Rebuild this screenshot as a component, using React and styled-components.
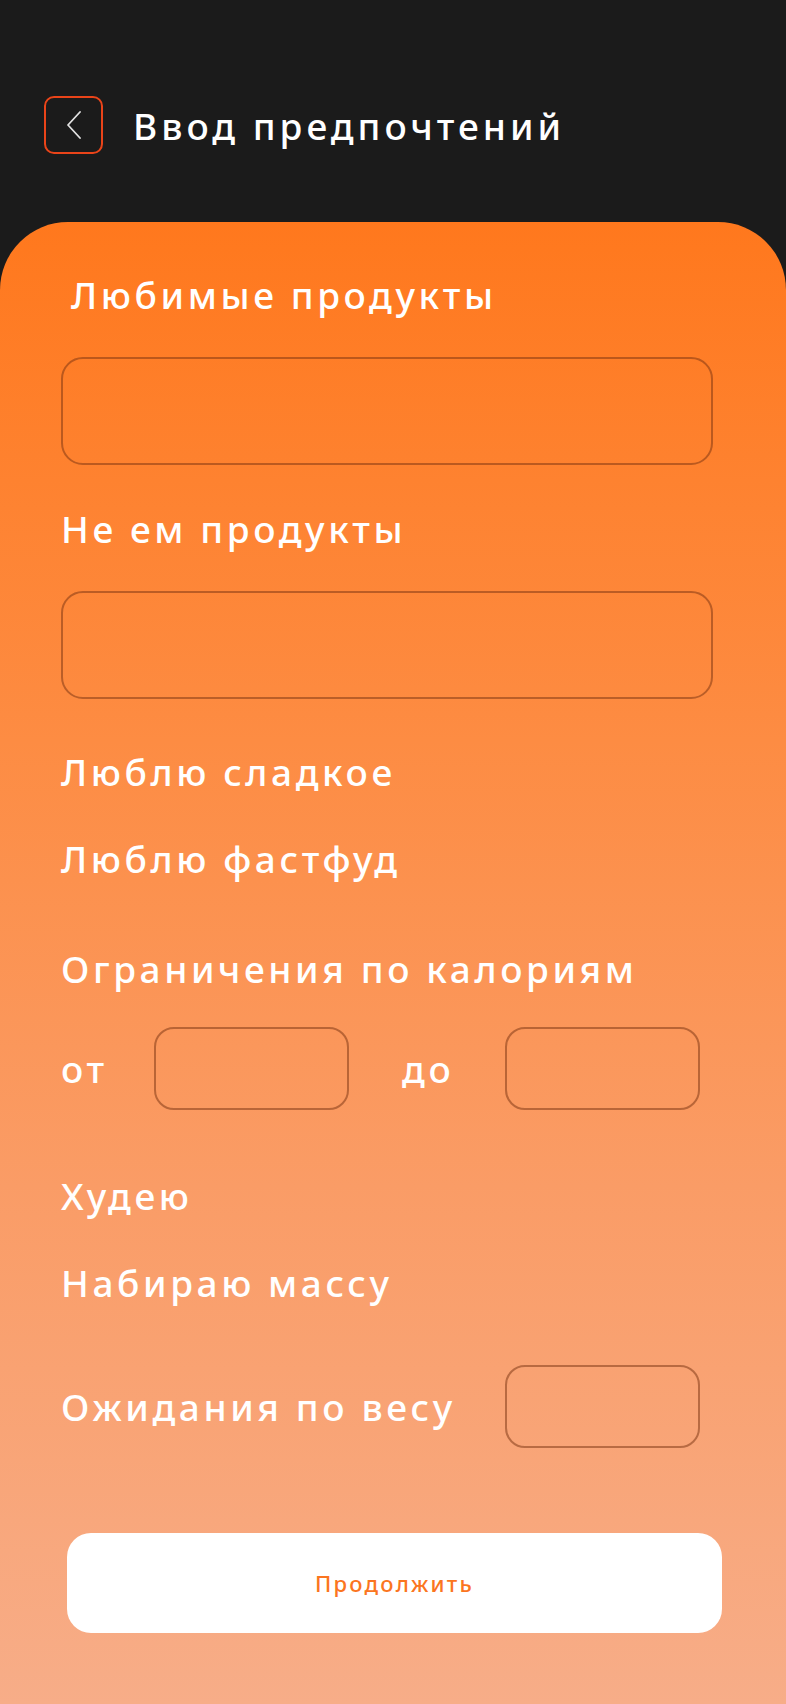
import React from 'react';
import styled, { createGlobalStyle } from 'styled-components';

const GlobalStyle = createGlobalStyle`
  * { box-sizing: border-box; }
  body {
    margin: 0;
    background: #1b1b1b;
    font-family: "Noto Sans", "Open Sans", sans-serif;
  }
`;

const App = () => {
  return (
    <>
      <GlobalStyle />
      <Page>
        <Header>
          <BackButton type="button" aria-label="Назад">
            <svg width="16" height="28" viewBox="0 0 16 28" fill="none">
              <path d="M14 1L2 14L14 27" stroke="#e2e2e2" strokeWidth="1.8" strokeLinecap="round" strokeLinejoin="round" />
            </svg>
          </BackButton>
          <Title>Ввод предпочтений</Title>
        </Header>

        <Card>
          <Label $indent={10}>Любимые продукты</Label>
          <BigInput $top={40} />

          <Label $top={42}>Не ем продукты</Label>
          <BigInput $top={40} />

          <Label $top={51}>Люблю сладкое</Label>
          <Label $top={43}>Люблю фастфуд</Label>

          <Label $top={66}>Ограничения по калориям</Label>
          <Row $top={36}>
            <RowLabel $width={93}>от</RowLabel>
            <SmallInput />
            <RowLabel $width={103} $left={53}>до</RowLabel>
            <SmallInput />
          </Row>

          <Label $top={64}>Худею</Label>
          <Label $top={43}>Набираю массу</Label>

          <Row $top={60}>
            <RowLabel $width={444}>Ожидания по весу</RowLabel>
            <SmallInput />
          </Row>

          <NextButton type="button">Продолжить</NextButton>
        </Card>
      </Page>
    </>
  );
};

export default App;

const Page = styled.div`
  width: 786px;
  min-height: 1704px;
  display: flex; flex-direction: column;
  background: #1b1b1b;
`;

const Header = styled.div`
  height: 222px;
  padding: 96px 0 0 44px;
  display: flex; align-items: flex-start;
`;

const BackButton = styled.button`
  width: 59px; height: 58px;
  border: 2px solid #ea4419;
  border-radius: 10px;
  background: transparent;
  display: flex; align-items: center; justify-content: center;
  padding: 0;
  cursor: pointer;
`;

const Title = styled.h1`
  margin: 0 0 0 30px;
  height: 58px;
  display: flex; align-items: center;
  color: #fff;
  font-size: 37px; font-weight: 500;
  letter-spacing: 4px;
  white-space: nowrap;
`;

const Card = styled.div`
  flex: 1;
  display: flex; flex-direction: column; align-items: flex-start;
  padding: 51px 73px 60px 61px;
  border-radius: 68px 68px 0 0;
  background: linear-gradient(180deg, #ff781d 0%, #fd8c43 35%, #fa9c66 65%, #f7ad88 100%);
`;

const Label = styled.div`
  margin-top: ${(p) => p.$top || 0}px;
  margin-left: ${(p) => p.$indent || 0}px;
  height: 44px;
  line-height: 44px;
  color: #fff;
  font-size: 37px; font-weight: 500;
  letter-spacing: 3.6px;
  white-space: nowrap;
`;

const BigInput = styled.input`
  margin-top: ${(p) => p.$top || 0}px;
  width: 652px; height: 108px;
  border: 2px solid rgba(120, 50, 15, 0.5);
  border-radius: 22px;
  background: transparent;
  outline: none;
`;

const Row = styled.div`
  margin-top: ${(p) => p.$top || 0}px;
  display: flex; align-items: center;
`;

const RowLabel = styled.span`
  width: ${(p) => p.$width}px;
  margin-left: ${(p) => p.$left || 0}px;
  color: #fff;
  font-size: 37px; font-weight: 500;
  letter-spacing: 3.6px;
  white-space: nowrap;
`;

const SmallInput = styled.input`
  width: 195px; height: 83px;
  border: 2px solid rgba(120, 50, 15, 0.5);
  border-radius: 20px;
  background: transparent;
  outline: none;
`;

const NextButton = styled.button`
  margin: 85px 0 0 6px;
  width: 655px; height: 100px;
  border: none;
  border-radius: 24px;
  background: #fff;
  color: #fb7520;
  font-family: "Noto Sans", "Open Sans", sans-serif;
  font-size: 22px; font-weight: 500;
  letter-spacing: 2.2px;
  cursor: pointer;
`;
